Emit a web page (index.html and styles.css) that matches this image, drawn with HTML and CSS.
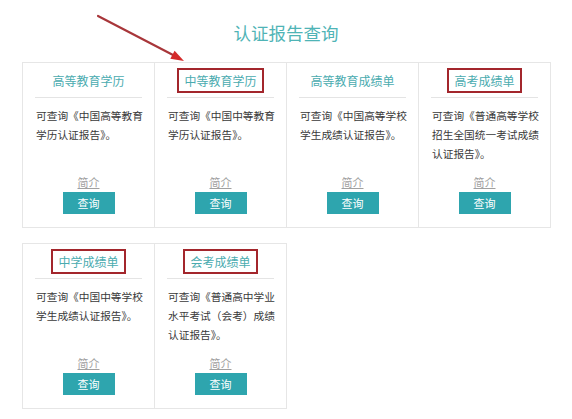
FILE: index.html
```html
<!DOCTYPE html>
<html lang="zh-CN">
<head>
<meta charset="utf-8">
<title>认证报告查询</title>
<link rel="stylesheet" href="styles.css">
</head>
<body>
<div class="page">
  <h1 class="title">认证报告查询</h1>
  <div class="row">
    <div class="card">
      <div class="head"><span class="name">高等教育学历</span></div>
      <p class="desc">可查询《中国高等教育学历认证报告》。</p>
      <a class="intro" href="#">简介</a>
      <span class="btn">查询</span>
    </div>
    <div class="card">
      <div class="head"><span class="name mark">中等教育学历</span></div>
      <p class="desc">可查询《中国中等教育学历认证报告》。</p>
      <a class="intro" href="#">简介</a>
      <span class="btn">查询</span>
    </div>
    <div class="card">
      <div class="head"><span class="name">高等教育成绩单</span></div>
      <p class="desc">可查询《中国高等学校学生成绩认证报告》。</p>
      <a class="intro" href="#">简介</a>
      <span class="btn">查询</span>
    </div>
    <div class="card">
      <div class="head"><span class="name mark">高考成绩单</span></div>
      <p class="desc">可查询《普通高等学校招生全国统一考试成绩认证报告》。</p>
      <a class="intro" href="#">简介</a>
      <span class="btn">查询</span>
    </div>
  </div>
  <div class="row">
    <div class="card">
      <div class="head"><span class="name mark">中学成绩单</span></div>
      <p class="desc">可查询《中国中等学校学生成绩认证报告》。</p>
      <a class="intro" href="#">简介</a>
      <span class="btn">查询</span>
    </div>
    <div class="card">
      <div class="head"><span class="name mark">会考成绩单</span></div>
      <p class="desc">可查询《普通高中学业水平考试（会考）成绩认证报告》。</p>
      <a class="intro" href="#">简介</a>
      <span class="btn">查询</span>
    </div>
  </div>
  <svg class="arrow" width="572" height="80" viewBox="0 0 572 80">
    <line x1="98" y1="16" x2="174" y2="55.5" stroke="#a8363a" stroke-width="2.2" stroke-linecap="round"/>
    <polygon points="184,61 170.3,58.7 174.6,50.7" fill="#d42a2a"/>
  </svg>
</div>
</body>
</html>
```
FILE: styles.css
```css
html, body {
  margin: 0;
  padding: 0;
  background: #ffffff;
}
.page {
  position: relative;
  width: 572px;
  height: 419px;
  font-family: "Noto Sans CJK SC", "Noto Sans", sans-serif;
  padding: 23px 0 0 22px;
  box-sizing: border-box;
}
.title {
  margin: 0 0 19px 0;
  width: 528px;
  text-align: center;
  font-size: 17.5px;
  line-height: 20px;
  font-weight: normal;
  color: #4fb4b6;
}
.row {
  display: flex;
  width: max-content;
  border: 1px solid #e6e6e6;
  border-right: none;
  margin-bottom: 15px;
}
.card {
  width: 131px;
  height: 164px;
  border-right: 1px solid #e6e6e6;
  display: flex;
  flex-direction: column;
  align-items: center;
  box-sizing: content-box;
}
.head {
  margin: 5px 12px 0 12px;
  align-self: stretch;
  padding-bottom: 4px;
  border-bottom: 1px solid #e4e4e4;
  display: flex;
  justify-content: center;
}
.name {
  display: block;
  height: 21px;
  line-height: 21px;
  padding: 0 5px;
  border: 2px solid transparent;
  font-size: 12px;
  color: #4aabaf;
}
.name.mark {
  border-color: #a3262c;
}
.desc {
  flex: 1;
  align-self: stretch;
  margin: 8px 0 0 0;
  padding: 0 8px 0 13px;
  font-size: 10.7px;
  line-height: 19px;
  color: #3a3a3a;
}
.intro {
  font-size: 11px;
  line-height: 14px;
  color: #a0a0a0;
  text-decoration: underline;
  margin-bottom: 3px;
}
.btn {
  display: block;
  width: 52px;
  height: 22px;
  line-height: 22px;
  background: #2ea5ae;
  color: #ffffff;
  font-size: 11px;
  text-align: center;
  margin-bottom: 13px;
}
.arrow {
  position: absolute;
  left: 0;
  top: 0;
}
```
